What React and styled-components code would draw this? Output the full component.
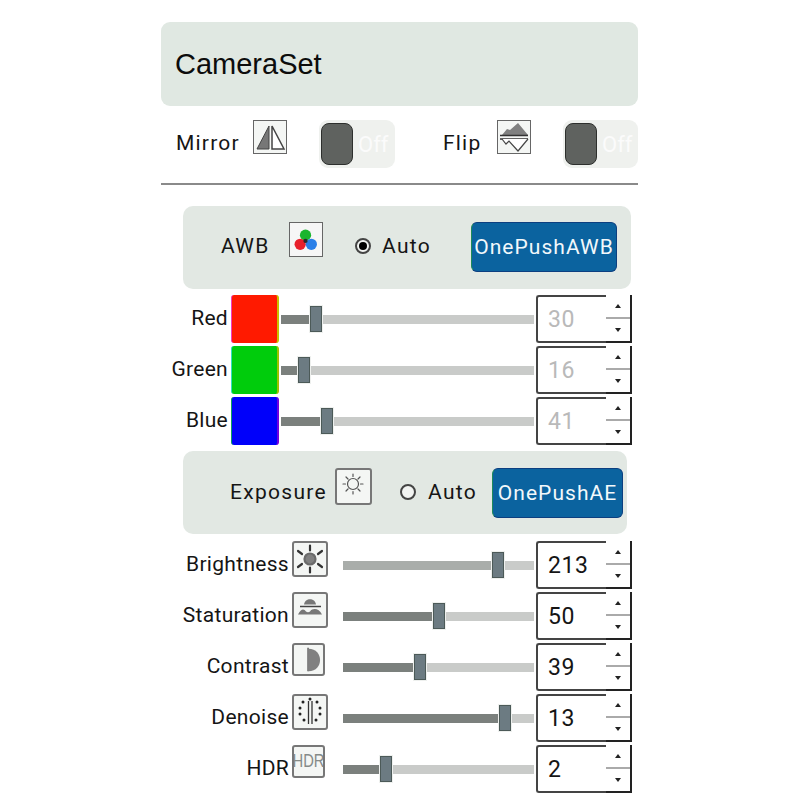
import React from "react";
import styled, { createGlobalStyle } from "styled-components";

const GlobalStyle = createGlobalStyle`
  html, body {
    margin: 0;
    padding: 0;
    background: #fff;
  }
`;

const Page = styled.div`
  width: 477px;
  height: 800px;
  box-sizing: border-box;
  margin-left: 161px;
  padding-top: 22px;
  font-family: Roboto, sans-serif;
  font-size: 21px;
  color: #151515;
  overflow: hidden;
`;

const Header = styled.div`
  height: 84px;
  display: flex;
  align-items: center;
  padding-left: 14px;
  box-sizing: border-box;
  background: #e0e8e2;
  border-radius: 9px;
  font-family: "Liberation Sans", sans-serif;
  font-size: 29px;
  color: #0c0c0c;
`;

const Toolbar = styled.div`
  margin-top: 14px;
  height: 48px;
  padding-left: 15px;
  display: grid;
  grid-template-columns: 77px 66px 124px 54px 66px 75px;
  align-items: center;
`;

const ToolbarLabel = styled.span`
  letter-spacing: 1.2px;
  padding-bottom: 2px;
`;

const IconFrame = styled.div`
  width: ${(p) => p.$w || 34}px;
  height: ${(p) => p.$h || 34}px;
  box-sizing: border-box;
  flex: none;
  align-self: flex-start;
  margin-left: ${(p) => p.$ml || 0}px;
  border: ${(p) => (p.$thick ? "2px solid #777" : "1px solid #666")};
  border-radius: ${(p) => (p.$thick ? 3 : 0)}px;
  background: ${(p) => p.$bg || "#f4f6f4"};
  display: flex;
  align-items: center;
  justify-content: center;
  overflow: hidden;
  svg {
    width: 100%;
    height: 100%;
    display: block;
  }
`;

const Toggle = styled.div`
  height: 48px;
  width: ${(p) => p.$w}px;
  box-sizing: border-box;
  padding-left: 2px;
  display: flex;
  align-items: center;
  gap: 5px;
  background: #eff1ee;
  border-radius: 9px;
`;

const ToggleKnob = styled.div`
  width: 32px;
  height: 42px;
  box-sizing: border-box;
  background: #5f625f;
  border: 1px solid #2d2f2d;
  border-radius: 8px;
`;

const ToggleText = styled.span`
  color: #fbfbfb;
  font-size: 22px;
`;

const Divider = styled.div`
  margin-top: 15px;
  height: 2px;
  background: #8a8a8a;
`;

const Panel = styled.div`
  margin: ${(p) => p.$top}px 0 0 22px;
  width: ${(p) => p.$w}px;
  height: 83px;
  box-sizing: border-box;
  padding: ${(p) => p.$padTop}px 0 0 ${(p) => p.$pad}px;
  background: #e2e8e3;
  border-radius: 10px;
`;

const PanelRow = styled.div`
  height: 50px;
  display: grid;
  grid-template-columns: ${(p) => p.$cols};
  align-items: center;
`;

const PanelLabel = styled.span`
  letter-spacing: 1.3px;
  padding-bottom: 2px;
`;

const Radio = styled.span`
  width: 16px;
  height: 16px;
  box-sizing: border-box;
  margin-bottom: 2px;
  border: 2px solid #444;
  border-radius: 50%;
  background: #f2f4f2;
  display: flex;
  align-items: center;
  justify-content: center;
  &::after {
    content: "";
    display: ${(p) => (p.$checked ? "block" : "none")};
    width: 8px;
    height: 8px;
    border-radius: 50%;
    background: #000;
  }
`;

const PushButton = styled.div`
  height: 50px;
  width: ${(p) => p.$w}px;
  box-sizing: border-box;
  display: flex;
  align-items: center;
  justify-content: center;
  background: #0b639f;
  border: 1px solid #0c3f80;
  border-left-color: #1f8a5a;
  border-radius: 6px;
  color: #f2f8fb;
  font-size: 21px;
  letter-spacing: 1.05px;
  white-space: nowrap;
`;

const Rows = styled.div`
  margin-top: ${(p) => p.$top}px;
  display: flex;
  flex-direction: column;
  gap: 3px;
`;

const Row = styled.div`
  height: 48px;
  display: flex;
  align-items: center;
`;

const RowLabel = styled.div`
  width: ${(p) => p.$w}px;
  flex: none;
  padding-bottom: 2px;
  text-align: right;
  letter-spacing: 0.3px;
  white-space: nowrap;
`;

const Swatch = styled.div`
  width: 48px;
  height: 48px;
  box-sizing: border-box;
  flex: none;
  margin-left: 3px;
  background: ${(p) => p.$color};
  border-left: 1px solid ${(p) => p.$left};
  border-right: 2px solid ${(p) => p.$right};
  border-radius: 3px;
`;

const Slider = styled.div`
  width: ${(p) => p.$w}px;
  height: 26px;
  flex: none;
  margin-left: ${(p) => p.$gap}px;
  position: relative;
  display: flex;
  align-items: center;
`;

const Track = styled.div`
  width: 100%;
  height: 9px;
  background: #c9cbc9;
`;

const TrackFill = styled.div`
  width: ${(p) => p.$pos}%;
  height: 100%;
  background: ${(p) => (p.$light ? "#a9adaa" : "#7b807d")};
`;

const Handle = styled.div`
  position: absolute;
  top: 0;
  left: ${(p) => p.$pos}%;
  width: 12px;
  height: 26px;
  box-sizing: border-box;
  margin-left: -6px;
  background: #6c7b82;
  border: 1px solid #4c5a58;
  outline: 1px solid #eef0ee;
`;

const Spin = styled.div`
  width: 96px;
  height: 48px;
  flex: none;
  margin-left: 2px;
  display: flex;
`;

const SpinValue = styled.div`
  flex: 1;
  box-sizing: border-box;
  padding-left: 10px;
  display: flex;
  align-items: center;
  border: 2px solid #444;
  border-right: none;
  border-radius: 3px 0 0 3px;
  font-size: 23px;
  letter-spacing: 0.6px;
  color: ${(p) => (p.$disabled ? "#b9b9b9" : "#151515")};
`;

const SpinSteppers = styled.div`
  width: 26px;
  box-sizing: border-box;
  display: flex;
  flex-direction: column;
  border-right: 2px solid #222;
  border-bottom: 2px solid #222;
`;

const SpinStep = styled.div`
  flex: 1;
  display: flex;
  align-items: center;
  justify-content: center;
  &:first-child {
    border-bottom: 2px solid #aaa;
  }
  &::after {
    content: "";
    width: 0;
    height: 0;
    border-left: 3px solid transparent;
    border-right: 3px solid transparent;
    ${(p) => (p.$up ? "border-bottom: 4px solid #222;" : "border-top: 4px solid #222;")}
  }
`;

const HdrText = styled.span`
  font-family: "Liberation Sans", sans-serif;
  font-size: 18px;
  color: #858a88;
  transform: scaleX(0.82);
  white-space: nowrap;
`;

const MirrorIcon = () => (
  <svg viewBox="0 0 32 32">
    <polygon points="3,28 15,28 15,5" fill="#777" stroke="#444" strokeWidth="1" />
    <polygon points="18,5 18,28 30,28" fill="#fff" stroke="#444" strokeWidth="1.5" />
  </svg>
);

const FlipIcon = () => (
  <svg viewBox="0 0 32 32">
    <polygon points="4,14 9,8 12,9 20,2 30,14" fill="#808080" />
    <path d="M2 14.5H30M2 18H30" stroke="#333" strokeWidth="1.3" />
    <path d="M4 18l4 5 3-3 9 10 10-12" fill="#fff" stroke="#444" strokeWidth="1.2" />
  </svg>
);

const AwbIcon = () => (
  <svg viewBox="0 0 33 33">
    <circle cx="16" cy="12" r="5.8" fill="#19b52d" />
    <circle cx="10.5" cy="21.5" r="5.8" fill="#e8202c" />
    <circle cx="22" cy="21.5" r="5.8" fill="#2a7fe8" />
    <circle cx="16" cy="18" r="2.2" fill="#2b2b2b" />
  </svg>
);

const SunOutlineIcon = () => (
  <svg viewBox="0 0 33 33" fill="none" stroke="#555" strokeWidth="1.2" strokeLinecap="round">
    <circle cx="16" cy="14" r="5.5" />
    <path d="M16 4v2.5M16 21.5V24M6 14h2.5M23.5 14H26M9 7l2 2M21 19l2 2M23 7l-2 2M11 19l-2 2" />
  </svg>
);

const BrightnessIcon = () => (
  <svg viewBox="0 0 32 32" fill="none" stroke="#333" strokeWidth="2.2" strokeLinecap="round">
    <circle cx="16" cy="16" r="5.5" fill="#808080" stroke="#6a6a6a" />
    <path d="M16 2.5v5M16 24.5v5M4 8l4 3M28 8l-4 3M4 24l4-3M28 24l-4-3" />
  </svg>
);

const SaturationIcon = () => (
  <svg viewBox="0 0 32 32">
    <path d="M10 10.5c1-7 11-7 12 0z" fill="#777" />
    <path d="M6 12.5H27" stroke="#444" strokeWidth="1.4" />
    <path d="M4 20.5c3-6 6-6 8-3 1 1 3 1 4 0 3-4 9-3 12 3z" fill="#777" />
  </svg>
);

const ContrastIcon = () => (
  <svg viewBox="0 0 30 32">
    <path d="M14.5 3v26" stroke="#444" strokeWidth="1.4" />
    <path d="M15 4c17 0 17 25 0 25z" fill="#808080" />
  </svg>
);

const denoiseDots = [
  [16, 3], [9, 6], [23, 6], [6, 12], [26, 12], [6, 18], [26, 18], [10, 24], [22, 24],
];

const DenoiseIcon = () => (
  <svg viewBox="0 0 32 32">
    <path d="M14.5 5v23M18 5v23" stroke="#333" strokeWidth="1.3" />
    {denoiseDots.map(([cx, cy]) => (
      <circle key={`${cx}-${cy}`} cx={cx} cy={cy} r="1.5" fill="#222" />
    ))}
  </svg>
);

const colorRows = [
  { label: "Red", value: 30, color: "#ff1a00", left: "#f040c0", right: "#c8c000", pos: 13.8 },
  { label: "Green", value: 16, color: "#00cc0c", left: "#30e0c0", right: "#a0c000", pos: 9.1 },
  { label: "Blue", value: 41, color: "#0000fa", left: "#10a060", right: "#7000e0", pos: 18.2 },
];

const imageRows = [
  { label: "Brightness", value: 213, pos: 81.2, light: true, icon: <BrightnessIcon /> },
  { label: "Staturation", value: 50, pos: 50.3, icon: <SaturationIcon /> },
  { label: "Contrast", value: 39, pos: 40.3, w: 33, icon: <ContrastIcon /> },
  { label: "Denoise", value: 13, pos: 84.8, icon: <DenoiseIcon /> },
  { label: "HDR", value: 2, pos: 22.5, w: 33, icon: <HdrText>HDR</HdrText> },
];

const SliderBar = ({ width, gap, pos, light }) => (
  <Slider $w={width} $gap={gap}>
    <Track>
      <TrackFill $pos={pos} $light={light} />
    </Track>
    <Handle $pos={pos} />
  </Slider>
);

const SpinBox = ({ value, disabled }) => (
  <Spin>
    <SpinValue $disabled={disabled}>{value}</SpinValue>
    <SpinSteppers>
      <SpinStep $up />
      <SpinStep />
    </SpinSteppers>
  </Spin>
);

export default function App() {
  return (
    <>
      <GlobalStyle />
      <Page>
        <Header>CameraSet</Header>

        <Toolbar>
          <ToolbarLabel>Mirror</ToolbarLabel>
          <IconFrame>
            <MirrorIcon />
          </IconFrame>
          <Toggle $w={76}>
            <ToggleKnob />
            <ToggleText>Off</ToggleText>
          </Toggle>
          <ToolbarLabel>Flip</ToolbarLabel>
          <IconFrame>
            <FlipIcon />
          </IconFrame>
          <Toggle $w={75}>
            <ToggleKnob />
            <ToggleText>Off</ToggleText>
          </Toggle>
        </Toolbar>

        <Divider />

        <Panel $top={21} $w={448} $pad={38} $padTop={16}>
          <PanelRow $cols="68px 66px 27px 89px 146px">
            <PanelLabel>AWB</PanelLabel>
            <IconFrame $h={35} $bg="#f6f6f6">
              <AwbIcon />
            </IconFrame>
            <Radio $checked />
            <PanelLabel>Auto</PanelLabel>
            <PushButton $w={146}>OnePushAWB</PushButton>
          </PanelRow>
        </Panel>

        <Rows $top={6}>
          {colorRows.map((row) => (
            <Row key={row.label}>
              <RowLabel $w={67}>{row.label}</RowLabel>
              <Swatch $color={row.color} $left={row.left} $right={row.right} />
              <SliderBar width={253} gap={2} pos={row.pos} />
              <SpinBox value={row.value} disabled />
            </Row>
          ))}
        </Rows>

        <Panel $top={6} $w={444} $pad={47} $padTop={17}>
          <PanelRow $cols="105px 65px 28px 64px 131px">
            <PanelLabel>Exposure</PanelLabel>
            <IconFrame $w={37} $h={37} $thick>
              <SunOutlineIcon />
            </IconFrame>
            <Radio />
            <PanelLabel>Auto</PanelLabel>
            <PushButton $w={131}>OnePushAE</PushButton>
          </PanelRow>
        </Panel>

        <Rows $top={7}>
          {imageRows.map((row) => (
            <Row key={row.label}>
              <RowLabel $w={128}>{row.label}</RowLabel>
              <IconFrame $w={row.w || 36} $h={row.w || 36} $ml={3} $thick>
                {row.icon}
              </IconFrame>
              <SliderBar width={191} gap={row.w ? 18 : 15} pos={row.pos} light={row.light} />
              <SpinBox value={row.value} />
            </Row>
          ))}
        </Rows>
      </Page>
    </>
  );
}
